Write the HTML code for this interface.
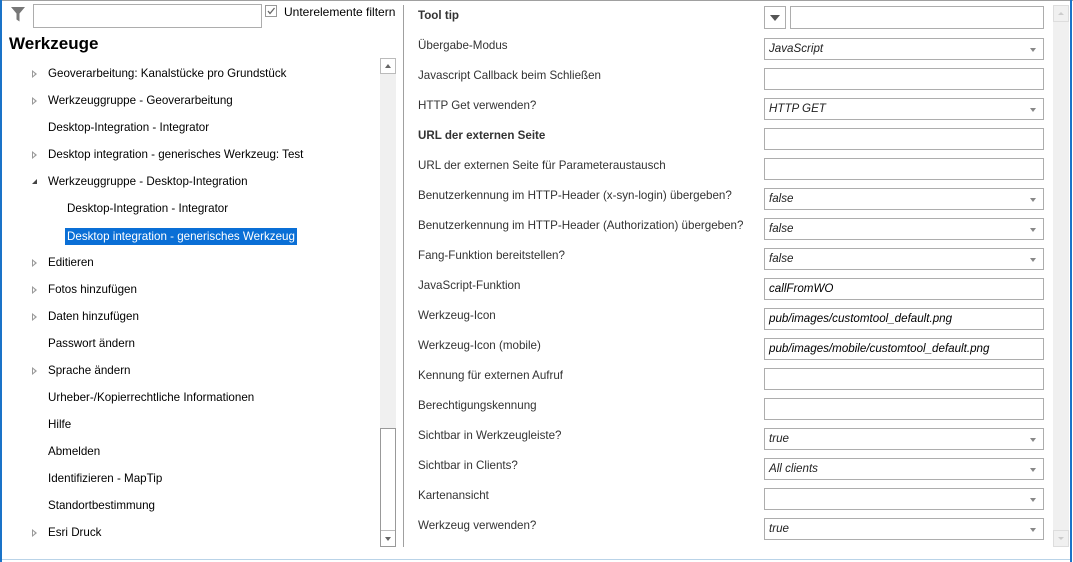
<!DOCTYPE html>
<html><head><meta charset="utf-8"><style>
*{margin:0;padding:0;box-sizing:border-box}
body{width:1073px;height:562px;background:#fff;position:relative;overflow:hidden;font-family:"Liberation Sans",sans-serif;font-size:11.6px;color:#000}
.a{position:absolute;white-space:nowrap}
.t{position:absolute;left:48px;white-space:nowrap;line-height:16px}
.arr{position:absolute;left:32px;width:0;height:0;border-top:4px solid transparent;border-bottom:4px solid transparent;border-left:5px solid #999}
.arr::after{content:"";position:absolute;left:-4px;top:-2px;border-top:2px solid transparent;border-bottom:2px solid transparent;border-left:2px solid #fff}
.l{position:absolute;left:418px;color:#333;white-space:nowrap;line-height:16px}
.in{position:absolute;left:764px;width:280px;height:22px;border:1px solid #adadad;background:#fff;font-style:italic;color:#222;padding-left:4px;line-height:20px}
.dd::after{content:"";position:absolute;right:7px;top:9px;border-left:3px solid transparent;border-right:3px solid transparent;border-top:4px solid #888}
</style></head><body>
<div class="a" style="left:0;top:0;width:1073px;height:1px;background:#a0a0a0"></div>
<div class="a" style="left:0;top:0;width:2px;height:562px;background:#1a73c8"></div>
<div class="a" style="left:1070px;top:0;width:2px;height:562px;background:#1a73c8"></div>
<div class="a" style="left:2px;top:559px;width:1068px;height:1px;background:#b9d3e8"></div>

<svg class="a" style="left:10px;top:6px" width="16" height="17" viewBox="0 0 16 17"><path d="M1 1H15L9.5 7.5V15.5L6.5 13.5V7.5Z" fill="#777"/></svg>
<div class="a" style="left:33px;top:4px;width:229px;height:24px;border:1px solid #adadad"></div>
<div class="a" style="left:265px;top:5px;width:12px;height:12px;border:1px solid #999"><svg width="10" height="10" style="position:absolute;left:0;top:0"><path d="M2 5L4 7.5L8.5 2" stroke="#666" stroke-width="1.3" fill="none"/></svg></div>
<div class="a" style="left:284px;top:4px;line-height:16px;font-size:12px">Unterelemente filtern</div>
<div class="a" style="left:9px;top:34px;font-size:17px;font-weight:bold">Werkzeuge</div>

<div class="arr" style="top:70px"></div><div class="t" style="top:66px">Geoverarbeitung: Kanalstücke pro Grundstück</div>
<div class="arr" style="top:97px"></div><div class="t" style="top:93px">Werkzeuggruppe - Geoverarbeitung</div>
<div class="t" style="top:120px">Desktop-Integration - Integrator</div>
<div class="arr" style="top:151px"></div><div class="t" style="top:147px">Desktop integration - generisches Werkzeug: Test</div>
<svg class="a" style="left:31px;top:178px" width="8" height="8"><path d="M6 1V6H1Z" fill="#444"/></svg><div class="t" style="top:174px">Werkzeuggruppe - Desktop-Integration</div>
<div class="t" style="top:201px;left:67px">Desktop-Integration - Integrator</div>
<div class="t" style="top:228px;left:65px;color:#fff;background:#0a6fd6;padding:0 2px;line-height:17px">Desktop integration - generisches Werkzeug</div>
<div class="arr" style="top:259px"></div><div class="t" style="top:255px">Editieren</div>
<div class="arr" style="top:286px"></div><div class="t" style="top:282px">Fotos hinzufügen</div>
<div class="arr" style="top:313px"></div><div class="t" style="top:309px">Daten hinzufügen</div>
<div class="t" style="top:336px">Passwort ändern</div>
<div class="arr" style="top:367px"></div><div class="t" style="top:363px">Sprache ändern</div>
<div class="t" style="top:390px">Urheber-/Kopierrechtliche Informationen</div>
<div class="t" style="top:417px">Hilfe</div>
<div class="t" style="top:444px">Abmelden</div>
<div class="t" style="top:471px">Identifizieren - MapTip</div>
<div class="t" style="top:498px">Standortbestimmung</div>
<div class="arr" style="top:529px"></div><div class="t" style="top:525px">Esri Druck</div>

<div class="a" style="left:380px;top:58px;width:16px;height:489px;background:#f0f0f0"></div>
<div class="a" style="left:380px;top:58px;width:16px;height:16px;border:1px solid #bbb;background:#fff"><div style="position:absolute;left:4px;top:5px;border-left:3px solid transparent;border-right:3px solid transparent;border-bottom:4px solid #666"></div></div>
<div class="a" style="left:380px;top:428px;width:16px;height:119px;border:1px solid #999;background:#fff"></div>
<div class="a" style="left:381px;top:530px;width:14px;height:16px;border-top:1px solid #bbb"><div style="position:absolute;left:4px;top:6px;border-left:3px solid transparent;border-right:3px solid transparent;border-top:4px solid #666"></div></div>
<div class="a" style="left:403px;top:5px;width:1px;height:542px;background:#a0a0a0"></div>

<div class="l" style="top:8px;font-weight:bold">Tool tip</div>
<div class="a" style="left:764px;top:6px;width:22px;height:23px;border:1px solid #adadad"><div style="position:absolute;left:5px;top:8px;border-left:5px solid transparent;border-right:5px solid transparent;border-top:6px solid #555"></div></div>
<div class="a" style="left:790px;top:6px;width:254px;height:23px;border:1px solid #adadad"></div>

<div class="l" style="top:38px">Übergabe-Modus</div><div class="in dd" style="top:38px">JavaScript</div>
<div class="l" style="top:68px">Javascript Callback beim Schließen</div><div class="in" style="top:68px"></div>
<div class="l" style="top:98px">HTTP Get verwenden?</div><div class="in dd" style="top:98px">HTTP GET</div>
<div class="l" style="top:128px;font-weight:bold">URL der externen Seite</div><div class="in" style="top:128px"></div>
<div class="l" style="top:158px">URL der externen Seite für Parameteraustausch</div><div class="in" style="top:158px"></div>
<div class="l" style="top:188px">Benutzerkennung im HTTP-Header (x-syn-login) übergeben?</div><div class="in dd" style="top:188px">false</div>
<div class="l" style="top:218px">Benutzerkennung im HTTP-Header (Authorization) übergeben?</div><div class="in dd" style="top:218px">false</div>
<div class="l" style="top:248px">Fang-Funktion bereitstellen?</div><div class="in dd" style="top:248px">false</div>
<div class="l" style="top:278px">JavaScript-Funktion</div><div class="in" style="top:278px;color:#000">callFromWO</div>
<div class="l" style="top:308px">Werkzeug-Icon</div><div class="in" style="top:308px;color:#000">pub/images/customtool_default.png</div>
<div class="l" style="top:338px">Werkzeug-Icon (mobile)</div><div class="in" style="top:338px;color:#000">pub/images/mobile/customtool_default.png</div>
<div class="l" style="top:368px">Kennung für externen Aufruf</div><div class="in" style="top:368px"></div>
<div class="l" style="top:398px">Berechtigungskennung</div><div class="in" style="top:398px"></div>
<div class="l" style="top:428px">Sichtbar in Werkzeugleiste?</div><div class="in dd" style="top:428px">true</div>
<div class="l" style="top:458px">Sichtbar in Clients?</div><div class="in dd" style="top:458px">All clients</div>
<div class="l" style="top:488px">Kartenansicht</div><div class="in dd" style="top:488px"></div>
<div class="l" style="top:518px">Werkzeug verwenden?</div><div class="in dd" style="top:518px">true</div>

<div class="a" style="left:1053px;top:5px;width:16px;height:542px;background:#f0f0f0"></div>
<div class="a" style="left:1053px;top:5px;width:16px;height:17px;border:1px solid #ddd"><div style="position:absolute;left:4px;top:6px;border-left:3px solid transparent;border-right:3px solid transparent;border-bottom:3px solid #ccc"></div></div>
<div class="a" style="left:1053px;top:530px;width:16px;height:17px;border:1px solid #ddd"><div style="position:absolute;left:4px;top:6px;border-left:3px solid transparent;border-right:3px solid transparent;border-top:3px solid #ccc"></div></div>
</body></html>
